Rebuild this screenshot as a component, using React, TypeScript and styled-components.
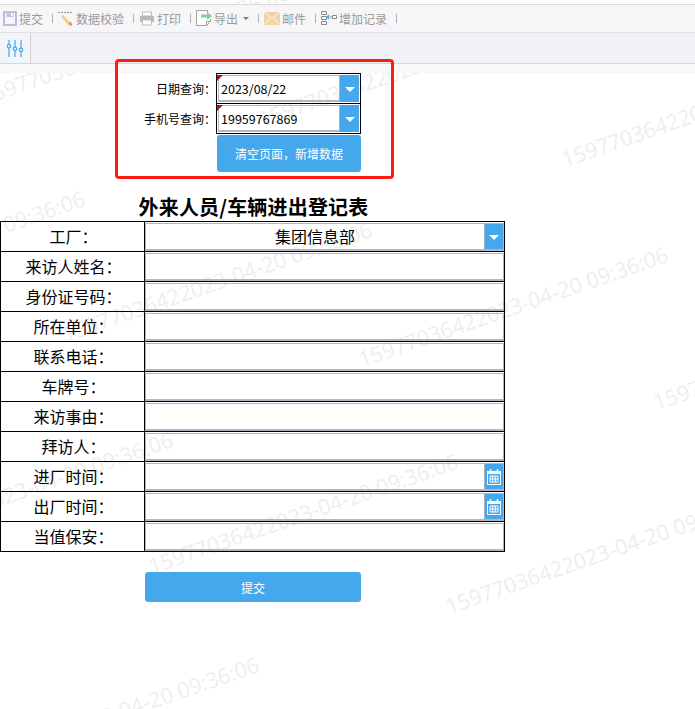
import React from "react";
import styled, { createGlobalStyle } from "styled-components";

const Global = createGlobalStyle`
  html, body { margin: 0; padding: 0; background: #fff; overflow: hidden; }
  body { font-family: "Noto Sans CJK SC", "Noto Sans", sans-serif; color: #000; }
`;

const Page = styled.div`
  position: relative;
  width: 695px;
  height: 709px;
  overflow: hidden;
  background: #fff;
`;

const Mark = styled.div<{ $x: number; $y: number }>`
  position: absolute;
  left: ${(p) => p.$x}px;
  top: ${(p) => p.$y - 30}px;
  height: 30px;
  line-height: 30px;
  white-space: nowrap;
  font-family: "Open Sans", sans-serif;
  font-size: 21.5px;
  color: #eeeeee;
  transform-origin: left bottom;
  transform: rotate(-19deg);
`;

const Front = styled.div`
  position: relative;
`;

const TopBar = styled.div`
  margin-top: 4px;
  height: 27px;
  display: flex;
  align-items: center;
  padding-left: 3px;
  background: #f6f6f8;
  border-top: 1px solid #d9d9d9;
  border-bottom: 1px solid #e1e1e5;
`;

const ToolItem = styled.div`
  display: flex;
  align-items: center;
  gap: 2px;
  font-size: 12px;
  color: #9a9a9a;
  white-space: nowrap;
`;

const Sep = styled.span`
  width: 1px;
  height: 9px;
  margin: 0 5px 0 9px;
  background: #b0b0b0;
`;

const Caret = styled.span`
  margin-left: 3px;
  width: 0;
  height: 0;
  border-left: 3px solid transparent;
  border-right: 3px solid transparent;
  border-top: 3px solid #777;
`;

const TabBar = styled.div`
  height: 30px;
  display: flex;
  background: #f1f2f6;
  border-bottom: 1px solid #d6d6da;
`;

const TabCell = styled.div`
  width: 30px;
  display: flex;
  align-items: center;
  justify-content: center;
  background: #f3f4f7;
  border-right: 1px solid #d0d0d4;
`;

const Band = styled.div`
  height: 9px;
  background: #f7f8fa;
`;

const Query = styled.div`
  display: flex;
  flex-direction: column;
`;

const QueryRow = styled.div`
  display: flex;
  height: 30px;
  align-items: center;
`;

const QueryLabel = styled.div`
  width: 216px;
  text-align: right;
  font-size: 12px;
  white-space: nowrap;
`;

const Combo = styled.div`
  position: relative;
  width: 145px;
  height: 31px;
  box-sizing: border-box;
  border: 1px solid #000;
  margin-bottom: -1px;
  padding: 1px;
  align-self: flex-start;
  display: flex;
`;

const ComboInner = styled.div`
  flex: 1;
  min-width: 0;
  display: flex;
  align-items: center;
  padding-left: 2px;
  border: 1px solid #b4b4c4;
  border-width: 1px 0 2px 1px;
  font-size: 12.5px;
`;

const Flag = styled.span`
  position: absolute;
  left: 0;
  top: 1px;
  width: 0;
  height: 0;
  border-top: 6px solid #b01010;
  border-right: 6px solid transparent;
`;

const Drop = styled.div<{ $w: number }>`
  width: ${(p) => p.$w}px;
  flex: none;
  margin-left: auto;
  display: flex;
  align-items: center;
  justify-content: center;
  background: #46a8ec;
  border-left: 1px solid #a9b2c2;
  box-sizing: border-box;
`;

const Arrow = styled.span`
  width: 0;
  height: 0;
  margin-top: 1px;
  border-left: 5px solid transparent;
  border-right: 5px solid transparent;
  border-top: 5px solid #fff;
`;

const BlueButton = styled.button<{ $left: number; $w: number; $h: number; $top: number }>`
  display: block;
  margin: ${(p) => p.$top}px 0 0 ${(p) => p.$left}px;
  width: ${(p) => p.$w}px;
  height: ${(p) => p.$h}px;
  padding: 0;
  border: 0;
  border-radius: 3px;
  background: #46a8ec;
  color: #fff;
  font-family: inherit;
  font-size: 12px;
`;

const Title = styled.h1`
  width: 505px;
  box-sizing: border-box;
  margin: 21px 0 0;
  padding-left: 2px;
  height: 28px;
  line-height: 28px;
  text-align: center;
  font-size: 20px;
  font-weight: 700;
  letter-spacing: 0.17px;
`;

const Table = styled.div`
  width: 505px;
  box-sizing: border-box;
  border-right: 1px solid #000;
  border-bottom: 1px solid #000;
  border-left: 1px solid #000;
`;

const Row = styled.div`
  display: flex;
  height: 30px;
  box-sizing: border-box;
  border-top: 1px solid #000;
`;

const Label = styled.div`
  width: 144px;
  flex: none;
  box-sizing: border-box;
  padding-left: 2px;
  text-align: center;
  font-size: 16px;
  line-height: 29px;
  white-space: nowrap;
  border-right: 1px solid #000;
`;

const Field = styled.div`
  flex: 1;
  min-width: 0;
  display: flex;
  margin: 1px 0 0;
  border: 1px solid #b4b4c4;
  border-width: 1px 1px 2px 1px;
  font-size: 16px;
`;

const FieldText = styled.div`
  flex: 1;
  text-align: center;
  line-height: 25px;
`;

const Panel = styled.div`
  position: absolute;
  left: 115px;
  top: 59px;
  width: 279px;
  height: 120px;
  box-sizing: border-box;
  border: 3px solid #ff1a12;
  border-radius: 4px;
  pointer-events: none;
`;

const Save = () => (
  <svg width="14" height="15" viewBox="0 0 14 15">
    <path d="M1 1h12v13H1z" fill="#f6f6f8" stroke="#a9aed8" strokeWidth="1.6" />
    <path d="M3.500 1h7v5h-7z" fill="#bfc3e4" />
    <path d="M8 2h1.500v3H8z" fill="#fff" />
  </svg>
);
const Pencil = () => (
  <svg width="16" height="16" viewBox="0 0 16 16">
    <path d="M0 1.500h14" stroke="#8a9aa8" strokeWidth="1" strokeDasharray="2 1" />
    <path d="M3 5l2-1 8 8-1 2-2 0z" fill="#f3cf84" />
    <path d="M11 12l2-1 1 3-2 1z" fill="#ee7d6e" />
  </svg>
);
const Printer = () => (
  <svg width="16" height="15" viewBox="0 0 16 15">
    <path d="M3.500 1h9v4h-9z" fill="#fff" stroke="#bbb" />
    <path d="M1 5h14v6H1z" fill="#b9b9b9" />
    <path d="M3.500 9h9v5h-9z" fill="#fff" stroke="#bbb" />
  </svg>
);
const Export = () => (
  <svg width="16" height="17" viewBox="0 0 16 17">
    <path d="M.5.5h11v4M.5.5v15h10l4-4V9" fill="#fff" stroke="#a3a3a3" />
    <path d="M10.500 15.500v-4h4" fill="none" stroke="#a3a3a3" />
    <path d="M5 4.500h6V2l5 4-5 4V7.500H5z" fill="#86cf94" />
  </svg>
);
const Mail = () => (
  <svg width="16" height="13" viewBox="0 0 16 13">
    <path d="M0 0h16v13H0z" fill="#f0d5a6" />
    <path d="M0 0l8 7 8-7M0 13l6-7M16 13l-6-7" fill="none" stroke="#fdf4e2" strokeWidth="1" />
  </svg>
);
const AddRow = () => (
  <svg width="16" height="15" viewBox="0 0 16 15">
    <path d="M.5.5h5v3h-5zM.5 5.500h5v3h-5zM.5 10.500h5v3h-5z" fill="none" stroke="#888" />
    <path d="M11.500 4.500h4v3h-4z" fill="none" stroke="#888" />
    <path d="M6 6h5M8 4L6 6l2 2" fill="none" stroke="#5aa7e0" strokeWidth="1.2" />
  </svg>
);
const Sliders = () => (
  <svg width="16" height="17" viewBox="0 0 16 17" fill="none" stroke="#3ea6ee" strokeWidth="1.2">
    <path d="M2 0v4.500M2 8v9M8 0v7M8 10.500V17M14 0v8M14 11.500V17" />
    <circle cx="2" cy="6.300" r="1.700" />
    <circle cx="8" cy="8.800" r="1.700" />
    <circle cx="14" cy="9.800" r="1.700" />
  </svg>
);
const Calendar = () => (
  <svg width="14" height="16" viewBox="0 0 14 16" fill="none" stroke="#fff">
    <path d="M.500 2.500h13v13H.500z" />
    <path d="M0 2h14v3H0z" fill="#fff" stroke="none" />
    <path d="M3.500 0v3M10.500 0v3" strokeWidth="1.400" />
    <path d="M3 7h8v6H3zM5.700 7v6M8.300 7v6M3 10h8" strokeWidth="1" />
  </svg>
);

const tools: [React.ReactNode, string, boolean?][] = [
  [<Save />, "提交"],
  [<Pencil />, "数据校验"],
  [<Printer />, "打印"],
  [<Export />, "导出", true],
  [<Mail />, "邮件"],
  [<AddRow />, "增加记录"],
];

const STR = "15977036422023-04-20 09:36:06";
const marks: [number, number][] = [
  [-14, 112],
  [264, 134],
  [567, 174],
  [-219, 318],
  [68, 349],
  [364, 374],
  [659, 417],
  [-131, 559],
  [154, 581],
  [451, 621],
  [-45, 784],
];

const rows: { label: string; kind?: "select" | "date" }[] = [
  { label: "工厂：", kind: "select" },
  { label: "来访人姓名：" },
  { label: "身份证号码：" },
  { label: "所在单位：" },
  { label: "联系电话：" },
  { label: "车牌号：" },
  { label: "来访事由：" },
  { label: "拜访人：" },
  { label: "进厂时间：", kind: "date" },
  { label: "出厂时间：", kind: "date" },
  { label: "当值保安：" },
];

export default function App() {
  return (
    <Page>
      <Global />
      {marks.map(([x, y]) => (
        <Mark key={`${x}-${y}`} $x={x} $y={y}>
          {STR}
        </Mark>
      ))}
      <Front>
        <TopBar>
          {tools.map(([icon, text, caret]) => (
            <React.Fragment key={text}>
              <ToolItem>
                {icon}
                {text}
                {caret && <Caret />}
              </ToolItem>
              <Sep />
            </React.Fragment>
          ))}
        </TopBar>
        <TabBar>
          <TabCell>
            <Sliders />
          </TabCell>
        </TabBar>
        <Band />
        <Query>
          <QueryRow>
            <QueryLabel>日期查询：</QueryLabel>
            <Combo>
              <Flag />
              <ComboInner>2023/08/22</ComboInner>
              <Drop $w={20}>
                <Arrow />
              </Drop>
            </Combo>
          </QueryRow>
          <QueryRow>
            <QueryLabel>手机号查询：</QueryLabel>
            <Combo>
              <Flag />
              <ComboInner>19959767869</ComboInner>
              <Drop $w={20}>
                <Arrow />
              </Drop>
            </Combo>
          </QueryRow>
        </Query>
        <BlueButton $left={217} $w={144} $h={37} $top={2}>
          清空页面，新增数据
        </BlueButton>
        <Title>外来人员/车辆进出登记表</Title>
        <Table>
          {rows.map((r) => (
            <Row key={r.label}>
              <Label>{r.label}</Label>
              <Field>
                {r.kind === "select" && <FieldText>集团信息部</FieldText>}
                {r.kind === "select" && (
                  <Drop $w={19}>
                    <Arrow />
                  </Drop>
                )}
                {r.kind === "date" && (
                  <Drop $w={19}>
                    <Calendar />
                  </Drop>
                )}
              </Field>
            </Row>
          ))}
        </Table>
        <BlueButton $left={145} $w={216} $h={30} $top={20}>
          提交
        </BlueButton>
      </Front>
      <Panel />
    </Page>
  );
}
